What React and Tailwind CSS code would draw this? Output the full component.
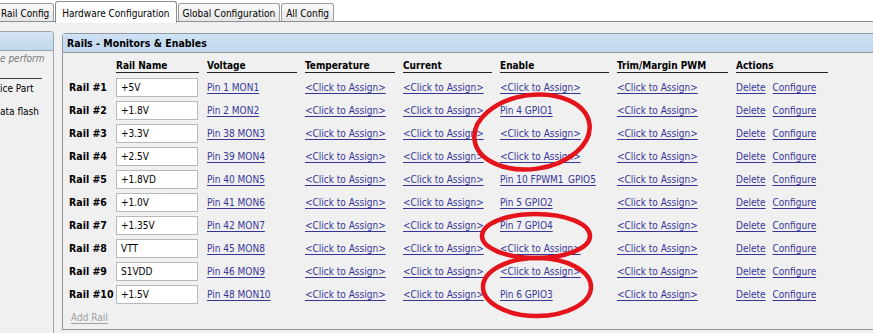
import React from "react";

const rails = [
  { name: "+5V", volt: "Pin 1 MON1", enable: null },
  { name: "+1.8V", volt: "Pin 2 MON2", enable: "Pin 4 GPIO1" },
  { name: "+3.3V", volt: "Pin 38 MON3", enable: null },
  { name: "+2.5V", volt: "Pin 39 MON4", enable: null },
  { name: "+1.8VD", volt: "Pin 40 MON5", enable: "Pin 10 FPWM1_GPIO5" },
  { name: "+1.0V", volt: "Pin 41 MON6", enable: "Pin 5 GPIO2" },
  { name: "+1.35V", volt: "Pin 42 MON7", enable: "Pin 7 GPIO4" },
  { name: "VTT", volt: "Pin 45 MON8", enable: null },
  { name: "S1VDD", volt: "Pin 46 MON9", enable: null },
  { name: "+1.5V", volt: "Pin 48 MON10", enable: "Pin 6 GPIO3" },
];

const columns = ["Rail Name", "Voltage", "Temperature", "Current", "Enable", "Trim/Margin PWM", "Actions"];
const gridCols = "grid grid-cols-[47px_91px_98px_98px_97px_117px_119px_100px]";

const Link = ({ children }) => (
  <span className="text-[#36369a] underline underline-offset-[2px] whitespace-nowrap">{children}</span>
);

const Tab = ({ label, active, className = "" }) =>
  active ? (
    <div className={`h-[22px] px-[6px] pt-[4px] bg-white border border-b-0 border-[#8c9094] rounded-t-[3px] relative top-[1px] ${className}`}>
      {label}
    </div>
  ) : (
    <div className={`h-[18px] px-[4px] pt-[2px] mt-[3px] bg-gradient-to-b from-[#fbfbfb] to-[#e6e6e6] border border-b-0 border-[#9a9ea2] rounded-t-[3px] ${className}`}>
      {label}
    </div>
  );

export default function App() {
  return (
    <div className="relative w-[873px] h-[333px] overflow-hidden bg-[#f0f0f0] text-[10px] text-black font-['DejaVu_Sans_Condensed','DejaVu_Sans',sans-serif]">
      {/* tab strip */}
      <div className="h-[22px] bg-white border-b border-[#8c9094] flex items-start gap-[1px]">
        <Tab label="Rail Config" className="-ml-[4px]" />
        <Tab label="Hardware Configuration" active />
        <Tab label="Global Configuration" />
        <Tab label="All Config" />
      </div>

      <div className="flex gap-[8px] h-[311px]">
        {/* clipped side panel */}
        <div className="w-[54px] shrink-0 mt-[9px] border-r border-t border-[#9aa4ae] rounded-tr-[4px] overflow-hidden">
          <div className="h-[19px] bg-gradient-to-b from-[#d3e3f3] to-[#c2d8ee] border-b border-[#9aa4ae]" />
          <div className="pt-[1px] whitespace-nowrap">
            <div className="italic text-[#7a7a7a] h-[14px] leading-[14px]">e perform</div>
            <div className="mt-[12px] w-[42px] border-b border-[#444]" />
            <div className="mt-[3px] h-[14px] leading-[14px]">ice Part</div>
            <div className="mt-[9px] h-[14px] leading-[14px]">ata flash</div>
          </div>
        </div>

        {/* main panel */}
        <div className="flex-1 mt-[11px] mb-[3px] border border-r-0 border-[#8e99a4] rounded-tl-[4px] flex flex-col">
          <div className="h-[19px] bg-gradient-to-b from-[#d0e2f4] to-[#c0d7ee] border-b border-[#8e99a4] pl-[4px] leading-[18px] font-bold text-[10.5px]">
            Rails - Monitors &amp; Enables
          </div>
          <div className="flex-1 px-[6px] pt-[6px]">
            <div className={gridCols}>
              <div />
              {columns.map((c) => (
                <div key={c} className="pr-[8px]">
                  <div className="h-[14px] leading-[14px] font-bold border-b border-[#222] whitespace-nowrap">{c}</div>
                </div>
              ))}
            </div>
            <div className="mt-[3px]">
              {rails.map((r, i) => (
                <div key={r.name} className={`${gridCols} h-[23px] items-center`}>
                  <div className="font-bold text-[10.5px] whitespace-nowrap">Rail #{i + 1}</div>
                  <div>
                    <input
                      readOnly
                      value={r.name}
                      className="w-[82px] h-[19px] bg-white border border-[#b5b9bd] px-[4px] text-[10px] outline-none"
                    />
                  </div>
                  <div><Link>{r.volt}</Link></div>
                  <div><Link>&lt;Click to Assign&gt;</Link></div>
                  <div><Link>&lt;Click to Assign&gt;</Link></div>
                  <div><Link>{r.enable || "<Click to Assign>"}</Link></div>
                  <div><Link>&lt;Click to Assign&gt;</Link></div>
                  <div className="flex gap-[7px]">
                    <Link>Delete</Link>
                    <Link>Configure</Link>
                  </div>
                </div>
              ))}
            </div>
            <div className="mt-[4px] pl-[2px] text-[#a0a0a0] underline underline-offset-[2px]">Add Rail</div>
          </div>
        </div>
      </div>

      {/* red annotation marks */}
      <svg className="absolute inset-0 pointer-events-none" width="873" height="333" viewBox="0 0 873 333">
        <g fill="none" stroke="#e5131b" strokeWidth="4.5">
          <ellipse cx="532" cy="132" rx="58" ry="37" transform="rotate(-8 532 132)" />
          <ellipse cx="536" cy="236" rx="54" ry="22" />
          <ellipse cx="537" cy="287" rx="54" ry="29" />
        </g>
      </svg>
    </div>
  );
}
